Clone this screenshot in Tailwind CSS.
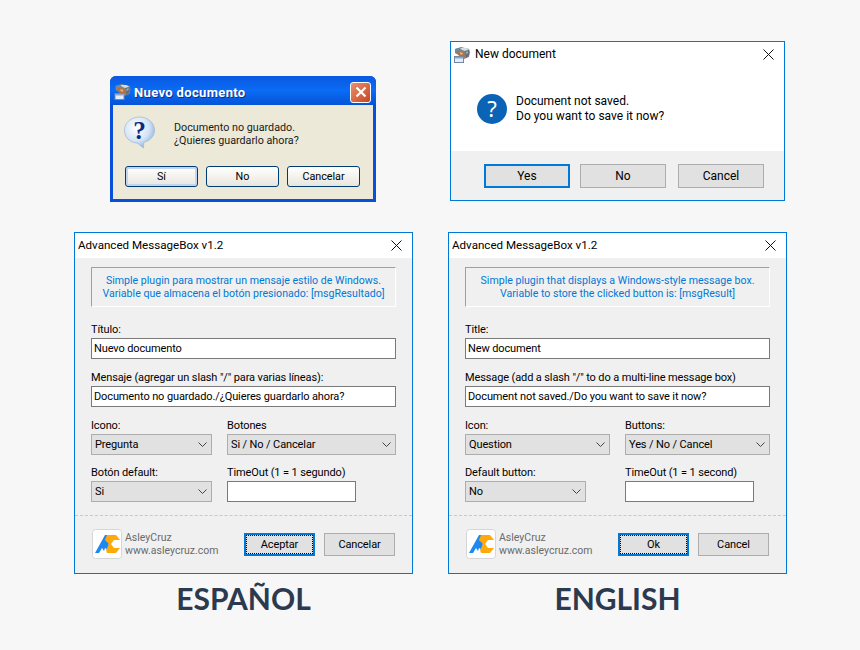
<!DOCTYPE html>
<html>
<head>
<meta charset="utf-8">
<script src="https://cdn.jsdelivr.net/npm/@tailwindcss/browser@4"></script>
</head>
<body class="m-0">
<div class="relative w-[860px] h-[650px] overflow-hidden bg-[#f7f7f7] font-['Roboto',sans-serif] text-[12px] leading-[16px] text-black">

<svg width="0" height="0" class="absolute">
  <defs>
    <symbol id="appicon" viewBox="0 0 16 16">
      <path d="M1 2l6-2 8 2 1 3-1 5-5 2-4-3-5-3z" fill="#8d8078"/>
      <path d="M1 2l5-1 3 1-4 2-3 0z" fill="#5f8fa8"/>
      <path d="M6 1l6 0 3 2-4 1-3-1z" fill="#cfe0e8"/>
      <path d="M3 4l5 0 2 1 1 4-3 2-3-2z" fill="#b8703f"/>
      <path d="M6 5l3 1-1 2-2-1z" fill="#e0b080"/>
      <path d="M11 4l4-1 0 5-3 3z" fill="#5d6f80"/>
      <path d="M12 5l2-1 0 2-2 1z" fill="#9fb2c0"/>
      <rect x="0.500" y="9.500" width="9" height="6" fill="#e6edf5" stroke="#7288a6" stroke-width="1"/>
      <rect x="1" y="10" width="8" height="1.500" fill="#8aa6cc"/>
    </symbol>
    <symbol id="logo" viewBox="0 0 30 30">
      <rect x="0.500" y="0.500" width="29" height="29" rx="3" fill="#fff" stroke="#d6d6d6"/>
      <path d="M3 24L13 6h5l-2 15-3-2-1 3-2-3-3 5z" fill="#1e88f0"/>
      <path d="M15 6h9l4 5h-6l-3 4 3 4h6l-4 5h-9l-1-3 3-6-4-4z" fill="#ffa90a"/>
    </symbol>
    <symbol id="chev" viewBox="0 0 9 5">
      <path d="M0.500 0.500L4.500 4.500L8.500 0.500" fill="none" stroke="#444" stroke-width="1"/>
    </symbol>
    <symbol id="xmark" viewBox="0 0 11 11">
      <path d="M0.500 0.500L10.500 10.500M10.500 0.500L0.500 10.500" fill="none" stroke="#111" stroke-width="1"/>
    </symbol>
    <radialGradient id="bub" cx="40%" cy="35%" r="70%">
      <stop offset="0" stop-color="#ffffff"/>
      <stop offset="0.6" stop-color="#d5e4f6"/>
      <stop offset="1" stop-color="#8aaed8"/>
    </radialGradient>
  </defs>
</svg>

<!-- XP dialog -->
<div class="absolute left-[110px] top-[76px] w-[266px] h-[126px] flex flex-col rounded-t-[6px] bg-[#0a4fd8] p-[3px] pt-0">
  <div class="h-[29px] shrink-0 -mx-[3px] px-[5px] pt-[3px] flex items-center rounded-t-[6px] bg-gradient-to-b from-[#0a58e2] via-[#0b6cf5] to-[#0553d6]">
    <svg class="w-[17px] h-[16px] shrink-0 -ml-[1px]"><use href="#appicon"/></svg>
    <span class="ml-[3px] mt-[1px] text-white font-bold text-[13px] tracking-[0.35px] [text-shadow:1px_1px_0_#0a2f90]">Nuevo documento</span>
    <div class="ml-auto w-[21px] h-[21px] rounded-[3px] border border-white bg-gradient-to-br from-[#e8906e] to-[#c8421c] flex items-center justify-center">
      <svg width="12" height="12" viewBox="0 0 12 12"><path d="M1.500 1.500L10.500 10.500M10.500 1.500L1.500 10.500" fill="none" stroke="#fff" stroke-width="2.200"/></svg>
    </div>
  </div>
  <div class="flex-1 bg-[#ece9d8] flex flex-col px-[12px]">
    <div class="flex h-[61px] pt-[11px] -ml-[2px]">
      <svg width="33" height="33" viewBox="0 0 33 34" class="shrink-0">
        <path d="M16.500 1C25 1 32 7 32 14.500C32 21 27 26 21 27L20.500 33L14.500 28C6 27.500 1 21.500 1 14.500C1 7 8 1 16.500 1Z" fill="url(#bub)" stroke="#9db5d3" stroke-width="0.700"/>
        <text x="16.500" y="24" text-anchor="middle" font-family="Liberation Serif" font-weight="700" font-size="26" fill="#0a2a80">?</text>
      </svg>
      <div class="ml-[18px] pt-[5px] text-[10.750px] leading-[13px] text-[#1a1a1a]">Documento no guardado.<br>¿Quieres guardarlo ahora?</div>
    </div>
    <div class="flex gap-[8px] text-[10.750px]">
      <div class="w-[73px] h-[21px] pt-[1px] rounded-[3px] border border-[#003c74] bg-gradient-to-b from-[#fff] to-[#e8e6dc] shadow-[inset_0_0_0_2px_#c2d6f2] flex items-center justify-center">Sí</div>
      <div class="w-[73px] h-[21px] pt-[1px] rounded-[3px] border border-[#003c74] bg-gradient-to-b from-[#fff] to-[#e8e6dc] flex items-center justify-center">No</div>
      <div class="w-[73px] h-[21px] pt-[1px] rounded-[3px] border border-[#003c74] bg-gradient-to-b from-[#fff] to-[#e8e6dc] flex items-center justify-center">Cancelar</div>
    </div>
  </div>
</div>

<!-- Win10 dialog -->
<div class="absolute left-[450px] top-[41px] w-[335px] h-[160px] flex flex-col border border-[#0078d7] bg-white">
  <div class="h-[24px] flex items-center pl-[3px] pr-[10px]">
    <svg class="w-[16px] h-[16px] shrink-0 mt-[1px]"><use href="#appicon"/></svg>
    <span class="ml-[5px]">New document</span>
    <svg class="ml-auto w-[11px] h-[11px]"><use href="#xmark"/></svg>
  </div>
  <div class="flex h-[85px] pl-[26px] pt-[28px]">
    <svg width="30" height="30" viewBox="0 0 30 30" class="shrink-0">
      <circle cx="15" cy="15" r="15" fill="#0b63b6"/>
      <text x="15" y="23" text-anchor="middle" font-family="Noto Sans" font-size="22" fill="#fff">?</text>
    </svg>
    <div class="ml-[9px] leading-[15px]">Document not saved.<br>Do you want to save it now?</div>
  </div>
  <div class="flex-1 bg-[#f0f0f0] flex items-start pl-[33px] pt-[13px]">
    <div class="w-[86px] h-[24px] border-2 border-[#0078d7] bg-[#e1e1e1] flex items-center justify-center">Yes</div>
    <div class="ml-[10px] w-[86px] h-[24px] border border-[#adadad] bg-[#e1e1e1] flex items-center justify-center">No</div>
    <div class="ml-[12px] w-[86px] h-[24px] border border-[#adadad] bg-[#e1e1e1] flex items-center justify-center">Cancel</div>
  </div>
</div>

<!-- Spanish form -->
<div class="absolute left-[74px] top-[232px] w-[339px] h-[342px] flex flex-col border border-[#0078d7] bg-[#f0f0f0] text-[11px] tracking-[-0.12px]">
  <div class="h-[24px] mb-[1px] bg-white flex items-center pl-[3px] pr-[10px] shrink-0 text-[11.600px] tracking-normal shadow-[0_1px_0_#fff]">
    <span>Advanced MessageBox v1.2</span>
    <svg class="ml-auto w-[11px] h-[11px]"><use href="#xmark"/></svg>
  </div>
  <div class="px-[16px] pt-[9px]">
    <div class="h-[40px] border border-t-[#a0a0a0] border-l-[#a0a0a0] border-r-white border-b-white flex flex-col items-center justify-center text-[#0078d7] text-[10.600px] tracking-normal leading-[13px] text-center"><span>Simple plugin para mostrar un mensaje estilo de Windows.</span><span>Variable que almacena el botón presionado: [msgResultado]</span></div>
    <div class="mt-[15px] h-[16px]">Título:</div>
    <div class="h-[21px] border border-[#7a7a7a] bg-white pl-[2px] leading-[20px]">Nuevo documento</div>
    <div class="mt-[11px] h-[16px]">Mensaje (agregar un slash "/" para varias líneas):</div>
    <div class="h-[21px] border border-[#7a7a7a] bg-white pl-[2px] leading-[20px]">Documento no guardado./¿Quieres guardarlo ahora?</div>
    <div class="grid grid-cols-[121px_169px] gap-x-[15px] mt-[11px]">
      <div>
        <div class="h-[16px]">Icono:</div>
        <div class="h-[21px] border border-[#adadad] bg-[#e1e1e1] flex items-center pl-[3px] pr-[4px]"><span class="mt-[1px]">Pregunta</span><svg class="ml-auto w-[9px] h-[5px]"><use href="#chev"/></svg></div>
      </div>
      <div>
        <div class="h-[16px]">Botones</div>
        <div class="h-[21px] border border-[#adadad] bg-[#e1e1e1] flex items-center pl-[3px] pr-[4px]"><span class="mt-[1px]">Si / No / Cancelar</span><svg class="ml-auto w-[9px] h-[5px]"><use href="#chev"/></svg></div>
      </div>
      <div class="mt-[10px]">
        <div class="h-[16px]">Botón default:</div>
        <div class="h-[21px] border border-[#adadad] bg-[#e1e1e1] flex items-center pl-[3px] pr-[4px]"><span class="mt-[1px]">Si</span><svg class="ml-auto w-[9px] h-[5px]"><use href="#chev"/></svg></div>
      </div>
      <div class="mt-[10px]">
        <div class="h-[16px]">TimeOut (1 = 1 segundo)</div>
        <div class="w-[129px] h-[21px] border border-[#7a7a7a] bg-white"></div>
      </div>
    </div>
  </div>
  <div class="mt-[13px] border-t border-dashed border-[#c8c8c8]"></div>
  <div class="flex items-start pl-[17px] pr-[17px] pt-[13px]">
    <svg class="w-[30px] h-[30px] shrink-0"><use href="#logo"/></svg>
    <div class="ml-[3px] text-[#6b6b6b] text-[10.500px] tracking-normal leading-[13px] pt-[2px]">AsleyCruz<br>www.asleycruz.com</div>
    <div class="ml-auto mt-[4px] w-[71px] h-[23px] pt-[1px] border-2 border-[#0078d7] bg-[#e1e1e1] flex items-center justify-center outline-1 outline-dotted outline-black -outline-offset-3">Aceptar</div>
    <div class="ml-[9px] mt-[4px] w-[71px] h-[23px] pt-[1px] border border-[#adadad] bg-[#e1e1e1] flex items-center justify-center">Cancelar</div>
  </div>
</div>
<div class="absolute left-[74px] top-[578px] w-[339px] text-center font-['Lato',sans-serif] font-bold text-[30px] leading-[40px] text-[#2c3a4f]">ESPAÑOL</div>

<!-- English form -->
<div class="absolute left-[448px] top-[232px] w-[339px] h-[342px] flex flex-col border border-[#0078d7] bg-[#f0f0f0] text-[11px] tracking-[-0.12px]">
  <div class="h-[24px] mb-[1px] bg-white flex items-center pl-[3px] pr-[10px] shrink-0 text-[11.600px] tracking-normal shadow-[0_1px_0_#fff]">
    <span>Advanced MessageBox v1.2</span>
    <svg class="ml-auto w-[11px] h-[11px]"><use href="#xmark"/></svg>
  </div>
  <div class="px-[16px] pt-[9px]">
    <div class="h-[40px] border border-t-[#a0a0a0] border-l-[#a0a0a0] border-r-white border-b-white flex flex-col items-center justify-center text-[#0078d7] text-[10.600px] tracking-normal leading-[13px] text-center"><span>Simple plugin that displays a Windows-style message box.</span><span>Variable to store the clicked button is: [msgResult]</span></div>
    <div class="mt-[15px] h-[16px]">Title:</div>
    <div class="h-[21px] border border-[#7a7a7a] bg-white pl-[2px] leading-[20px]">New document</div>
    <div class="mt-[11px] h-[16px]">Message (add a slash "/" to do a multi-line message box)</div>
    <div class="h-[21px] border border-[#7a7a7a] bg-white pl-[2px] leading-[20px]">Document not saved./Do you want to save it now?</div>
    <div class="grid grid-cols-[145px_145px] gap-x-[15px] mt-[11px]">
      <div>
        <div class="h-[16px]">Icon:</div>
        <div class="h-[21px] border border-[#adadad] bg-[#e1e1e1] flex items-center pl-[3px] pr-[4px]"><span class="mt-[1px]">Question</span><svg class="ml-auto w-[9px] h-[5px]"><use href="#chev"/></svg></div>
      </div>
      <div>
        <div class="h-[16px]">Buttons:</div>
        <div class="h-[21px] border border-[#adadad] bg-[#e1e1e1] flex items-center pl-[3px] pr-[4px]"><span class="mt-[1px]">Yes / No / Cancel</span><svg class="ml-auto w-[9px] h-[5px]"><use href="#chev"/></svg></div>
      </div>
      <div class="mt-[10px]">
        <div class="h-[16px]">Default button:</div>
        <div class="w-[121px] h-[21px] border border-[#adadad] bg-[#e1e1e1] flex items-center pl-[3px] pr-[4px]"><span class="mt-[1px]">No</span><svg class="ml-auto w-[9px] h-[5px]"><use href="#chev"/></svg></div>
      </div>
      <div class="mt-[10px]">
        <div class="h-[16px]">TimeOut (1 = 1 second)</div>
        <div class="w-[129px] h-[21px] border border-[#7a7a7a] bg-white"></div>
      </div>
    </div>
  </div>
  <div class="mt-[13px] border-t border-dashed border-[#c8c8c8]"></div>
  <div class="flex items-start pl-[17px] pr-[17px] pt-[13px]">
    <svg class="w-[30px] h-[30px] shrink-0"><use href="#logo"/></svg>
    <div class="ml-[3px] text-[#6b6b6b] text-[10.500px] tracking-normal leading-[13px] pt-[2px]">AsleyCruz<br>www.asleycruz.com</div>
    <div class="ml-auto mt-[4px] w-[71px] h-[23px] pt-[1px] border-2 border-[#0078d7] bg-[#e1e1e1] flex items-center justify-center outline-1 outline-dotted outline-black -outline-offset-3">Ok</div>
    <div class="ml-[9px] mt-[4px] w-[71px] h-[23px] pt-[1px] border border-[#adadad] bg-[#e1e1e1] flex items-center justify-center">Cancel</div>
  </div>
</div>
<div class="absolute left-[448px] top-[578px] w-[339px] text-center font-['Lato',sans-serif] font-bold text-[30px] leading-[40px] text-[#2c3a4f]">ENGLISH</div>

</div>
</body>
</html>
